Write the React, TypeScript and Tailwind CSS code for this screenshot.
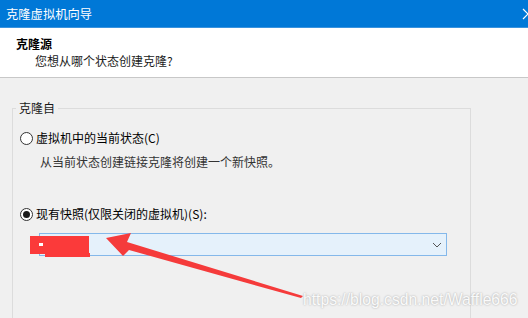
import React from "react";

const Radio: React.FC<{ checked?: boolean }> = ({ checked = false }) => (
  <span className="flex h-[13px] w-[13px] shrink-0 items-center justify-center rounded-full border border-[#333] bg-white">
    {checked && <span className="h-[7px] w-[7px] rounded-full bg-[#1a1a1a]" />}
  </span>
);

export default function App() {
  return (
    <div className="relative h-[318px] w-[528px] overflow-hidden bg-[#f0f0f0] font-['Noto_Sans_CJK_SC','Microsoft_YaHei',sans-serif] text-[12px] leading-[16px] text-black">
      {/* title bar */}
      <div className="flex h-[28px] items-center justify-between border-b border-[#3a93de] bg-[#0078d7] pl-[6px] text-white">
        <span className="text-[12.3px]">克隆虚拟机向导</span>
        <svg width="12" height="12" viewBox="0 0 12 12" className="mr-[-6px] shrink-0">
          <path d="M1 1 L11 11 M11 1 L1 11" stroke="#fff" strokeWidth="1.2" />
        </svg>
      </div>

      {/* header */}
      <div className="h-[50px] border-b border-[#c8c8c8] bg-white pl-[16px] pt-[8px]">
        <div className="font-bold">克隆源</div>
        <div className="mt-[1px] pl-[19px] text-[#1a1a1a]">您想从哪个状态创建克隆?</div>
      </div>

      {/* body */}
      <fieldset className="ml-[12px] mt-[22px] h-[240px] w-[459px] border border-[#dcdcdc]">
        <legend className="ml-[3px] px-[3px] text-[#1a1a1a]">克隆自</legend>

        <div className="ml-[7px] mt-[14px] flex items-center gap-[3px]">
          <Radio />
          <span>虚拟机中的当前状态(C)</span>
        </div>
        <div className="ml-[27px] mt-[8px] text-[#333]">从当前状态创建链接克隆将创建一个新快照。</div>

        <div className="ml-[7px] mt-[36px] flex items-center gap-[3px]">
          <Radio checked />
          <span>现有快照(仅限关闭的虚拟机)(S):</span>
        </div>
        <div className="ml-[26px] mt-[11px] flex h-[23px] w-[408px] items-center justify-end border border-[#84b8ea] bg-[#e5f1fb] pr-[4px]">
          <svg width="10" height="6" viewBox="0 0 10 6">
            <path d="M1 1 L5 5 L9 1" fill="none" stroke="#555" strokeWidth="1" />
          </svg>
        </div>
      </fieldset>

      {/* red redaction */}
      <div className="absolute left-[30px] top-[236px] h-[18px] w-[59px] bg-[#fb3a3a]" />
      <div className="absolute left-[45px] top-[253px] h-[4px] w-[45px] bg-[#fb3a3a]" />
      <div className="absolute left-[39px] top-[243px] h-[3px] w-[4px] bg-white" />

      {/* arrow */}
      <svg className="pointer-events-none absolute left-0 top-0" width="528" height="318">
        <polygon
          points="106,238 131,233 127,242 303,296 301,298 129,250 123,256"
          fill="#f53b3b"
        />
      </svg>

      {/* watermark */}
      <div className="absolute left-[303px] top-[290px] font-['Liberation_Sans',Arial,sans-serif] text-[15.7px] leading-[20px] text-[#fafafa] [text-shadow:0_0_2px_#a0a0a0]">
        https://blog.csdn.net/Waffle666
      </div>
    </div>
  );
}
